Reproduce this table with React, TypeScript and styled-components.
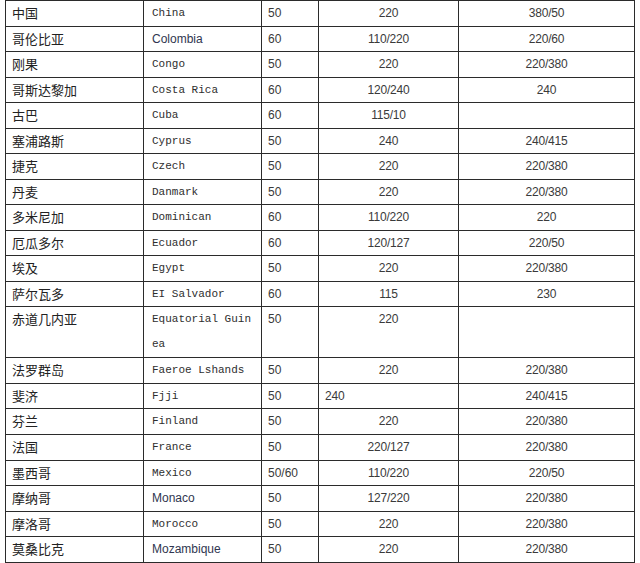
import { createGlobalStyle, styled } from 'styled-components';

const GlobalStyle = createGlobalStyle`
  html, body {
    margin: 0;
    padding: 0;
    background: #fff;
  }
  body {
    font-family: 'Noto Sans CJK SC', 'Liberation Sans', sans-serif;
    overflow: hidden;
  }
`;

type Row = {
  zh: string;
  en: string;
  enSans?: boolean;
  hz: string;
  v1: string;
  v1Left?: boolean;
  v2: string;
  lines?: number;
};

const ROWS: Row[] = [
  { zh: '中国', en: 'China', hz: '50', v1: '220', v2: '380/50' },
  { zh: '哥伦比亚', en: 'Colombia', enSans: true, hz: '60', v1: '110/220', v2: '220/60' },
  { zh: '刚果', en: 'Congo', hz: '50', v1: '220', v2: '220/380' },
  { zh: '哥斯达黎加', en: 'Costa Rica', hz: '60', v1: '120/240', v2: '240' },
  { zh: '古巴', en: 'Cuba', hz: '60', v1: '115/10', v2: '' },
  { zh: '塞浦路斯', en: 'Cyprus', hz: '50', v1: '240', v2: '240/415' },
  { zh: '捷克', en: 'Czech', hz: '50', v1: '220', v2: '220/380' },
  { zh: '丹麦', en: 'Danmark', hz: '50', v1: '220', v2: '220/380' },
  { zh: '多米尼加', en: 'Dominican', hz: '60', v1: '110/220', v2: '220' },
  { zh: '厄瓜多尔', en: 'Ecuador', hz: '60', v1: '120/127', v2: '220/50' },
  { zh: '埃及', en: 'Egypt', hz: '50', v1: '220', v2: '220/380' },
  { zh: '萨尔瓦多', en: 'EI Salvador', hz: '60', v1: '115', v2: '230' },
  { zh: '赤道几内亚', en: 'Equatorial Guinea', hz: '50', v1: '220', v2: '', lines: 2 },
  { zh: '法罗群岛', en: 'Faeroe Lshands', hz: '50', v1: '220', v2: '220/380' },
  { zh: '斐济', en: 'Fjji', hz: '50', v1: '240', v1Left: true, v2: '240/415' },
  { zh: '芬兰', en: 'Finland', hz: '50', v1: '220', v2: '220/380' },
  { zh: '法国', en: 'France', hz: '50', v1: '220/127', v2: '220/380' },
  { zh: '墨西哥', en: 'Mexico', hz: '50/60', v1: '110/220', v2: '220/50' },
  { zh: '摩纳哥', en: 'Monaco', enSans: true, hz: '50', v1: '127/220', v2: '220/380' },
  { zh: '摩洛哥', en: 'Morocco', hz: '50', v1: '220', v2: '220/380' },
  { zh: '莫桑比克', en: 'Mozambique', enSans: true, hz: '50', v1: '220', v2: '220/380' },
  { zh: '', en: '', hz: '', v1: '', v2: '' },
];

const COLUMN_WIDTHS = [138, 118, 57, 140, 176];
const ROW_HEIGHT = 25.53;

const Page = styled.div`
  padding-left: 5px;
`;

const Table = styled.table`
  width: 630px;
  table-layout: fixed;
  border-collapse: collapse;
`;

const Col = styled.col<{ $w: number }>`
  width: ${({ $w }) => $w}px;
`;

const Tr = styled.tr<{ $lines: number }>`
  height: ${({ $lines }) => $lines * ROW_HEIGHT}px;
`;

const Cell = styled.td`
  border: 1px solid #2b2b2b;
  padding: 0 6px;
  vertical-align: top;
  line-height: ${ROW_HEIGHT - 1}px;
  color: #333;
  white-space: nowrap;
`;

const ZhCell = styled(Cell)`
  font-family: 'Noto Sans CJK SC', sans-serif;
  font-size: 13px;
  color: #222;
`;

const EnCell = styled(Cell)<{ $sans?: boolean }>`
  padding-left: 8px;
  padding-right: 8px;
  white-space: normal;
  word-break: break-all;
  font-family: ${({ $sans }) =>
    $sans ? "'Liberation Sans', sans-serif" : "'Liberation Mono', monospace"};
  font-size: ${({ $sans }) => ($sans ? '12px' : '11px')};
  color: ${({ $sans }) => ($sans ? '#2f3650' : '#2e2e2e')};
`;

const HzCell = styled(Cell)`
  font-family: 'Liberation Sans', sans-serif;
  font-size: 12px;
  color: #3a3a3a;
`;

const VoltCell = styled(Cell)<{ $left?: boolean }>`
  text-align: ${({ $left }) => ($left ? 'left' : 'center')};
  font-family: 'Liberation Sans', sans-serif;
  font-size: 12px;
  letter-spacing: -0.2px;
  color: #3a3a3a;
`;

export default function App() {
  return (
    <Page>
      <GlobalStyle />
      <Table>
        <colgroup>
          {COLUMN_WIDTHS.map((w, i) => (
            <Col key={i} $w={w} />
          ))}
        </colgroup>
        <tbody>
          {ROWS.map((row, i) => (
            <Tr key={i} $lines={row.lines ?? 1}>
              <ZhCell>{row.zh}</ZhCell>
              <EnCell $sans={row.enSans}>{row.en}</EnCell>
              <HzCell>{row.hz}</HzCell>
              <VoltCell $left={row.v1Left}>{row.v1}</VoltCell>
              <VoltCell>{row.v2}</VoltCell>
            </Tr>
          ))}
        </tbody>
      </Table>
    </Page>
  );
}
